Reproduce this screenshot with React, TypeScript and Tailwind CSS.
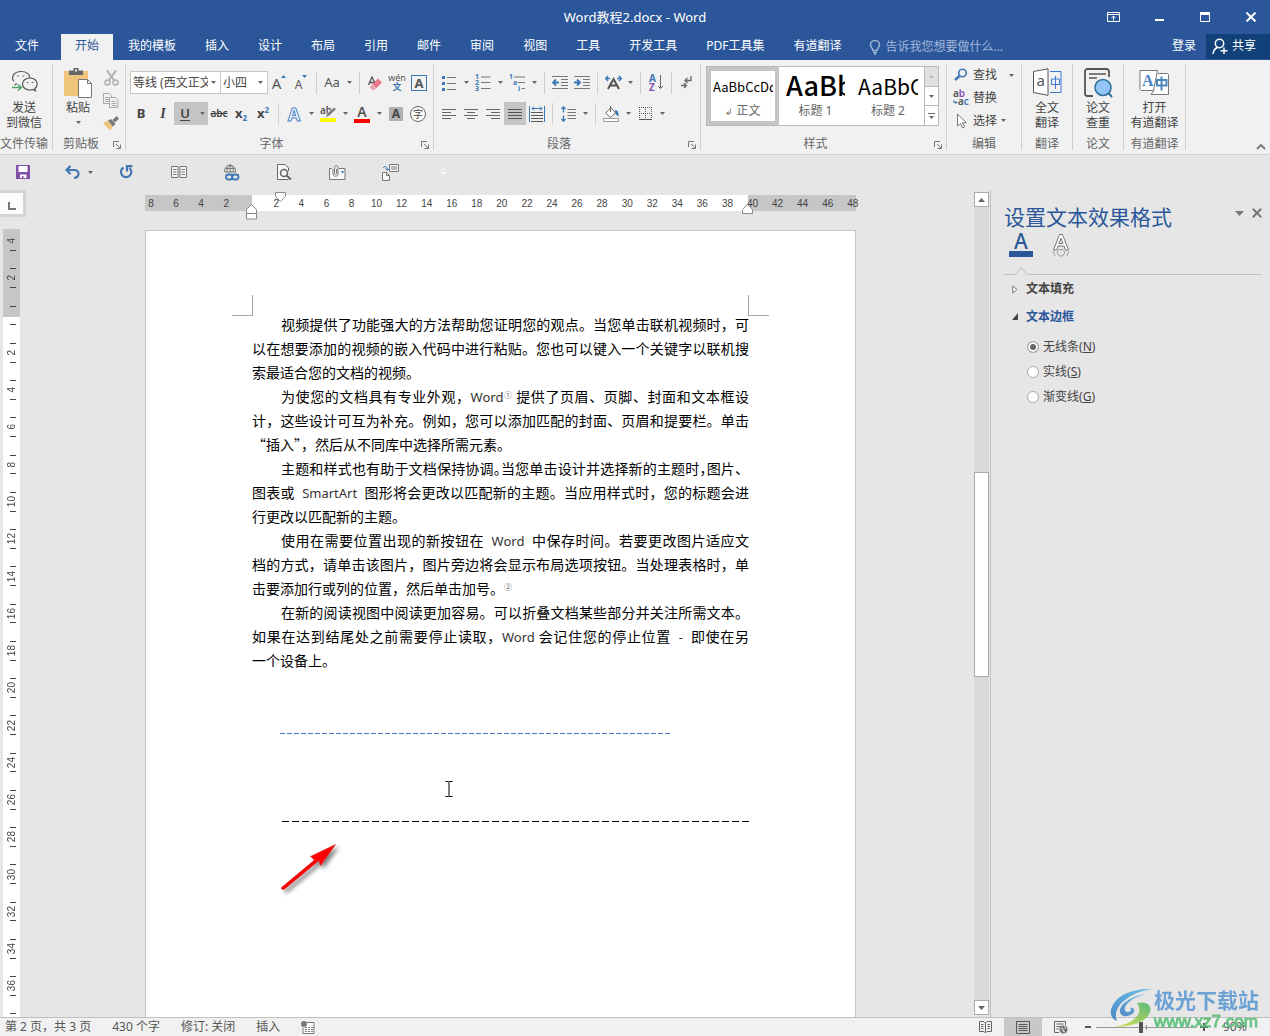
import { useState } from "react";
import type { ReactNode } from "react";

// ─── Small shared pieces ────────────────────────────────────────────────────

function Caret({ className = "" }: { className?: string }) {
  return (
    <svg width="5" height="3" viewBox="0 0 5 3" className={`shrink-0 ${className}`}>
      <path d="M0 0h5L2.5 3z" fill="#666" />
    </svg>
  );
}

function Sep() {
  return <span className="w-px h-[22px] mx-1 bg-[#d0d0d0] shrink-0" />;
}

interface ToolProps {
  label: string;
  active?: boolean;
  drop?: boolean;
  children: ReactNode;
}

function Tool({ label, active, drop, children }: ToolProps) {
  return (
    <button type="button" aria-label={label} title={label} className={`flex items-center h-[23px] shrink-0 ${active ? "bg-[#c5c5c5]" : ""}`}>
      <span className="w-[22px] flex items-center justify-center">{children}</span>
      {drop && (
        <span className="w-3 flex justify-center">
          <Caret />
        </span>
      )}
    </button>
  );
}

interface GroupProps {
  label: string;
  className: string;
  launcher?: boolean;
  children: ReactNode;
}

function Group({ label, className, launcher, children }: GroupProps) {
  return (
    <section aria-label={label} className={`flex flex-col h-[86px] shrink-0 border-r border-[#d0d0d0] ${className}`}>
      <div className="flex-1">{children}</div>
      <div className="flex h-[14px] items-start pt-px text-[#666]">
        <span className="flex-1 text-center leading-[14px] whitespace-nowrap">{label}</span>
        {launcher && (
          <button type="button" aria-label={`${label}设置`} className="w-4 flex justify-center pt-1">
            <svg width="8" height="8" viewBox="0 0 8 8" fill="none" stroke="#777">
              <path d="M.5 6V.5H6M3 3l4 4M7.5 3.5v4h-4" />
            </svg>
          </button>
        )}
      </div>
    </section>
  );
}

function BigButton({ lines, icon, drop }: { lines: string[]; icon: ReactNode; drop?: boolean }) {
  return (
    <button type="button" className="flex flex-col items-center pt-1 w-full">
      <span className="h-8 flex items-start justify-center">{icon}</span>
      {lines.map((l) => (
        <span key={l} className="leading-[15px] whitespace-nowrap">
          {l}
        </span>
      ))}
      {drop && <Caret className="mt-1.5" />}
    </button>
  );
}

// ─── Title bar and tabs ─────────────────────────────────────────────────────

const TABS = ["开始", "我的模板", "插入", "设计", "布局", "引用", "邮件", "审阅", "视图", "工具", "开发工具", "PDF工具集", "有道翻译"];

function TitleBar() {
  return (
    <div className="grid grid-cols-[1fr_auto_1fr] items-center h-[34px]">
      <span />
      <h1 className="text-[13px] pt-0.5">Word教程2.docx - Word</h1>
      <div className="flex justify-end">
        <button type="button" aria-label="功能区显示选项" className="w-[46px] flex justify-center">
          <svg width="13" height="10" viewBox="0 0 13 10" fill="none" stroke="#fff">
            <path d="M.5 .5h12v9H.5zM.5 2.5h12M6.5 8.5V4M4.5 6l2-2 2 2" />
          </svg>
        </button>
        <button type="button" aria-label="最小化" className="w-[46px] flex justify-center">
          <svg width="9" height="10" viewBox="0 0 9 10">
            <path d="M0 7h9v2H0z" fill="#fff" />
          </svg>
        </button>
        <button type="button" aria-label="最大化" className="w-[46px] flex justify-center">
          <svg width="10" height="10" viewBox="0 0 10 10">
            <path d="M.5 1h9v8.5H.5z" fill="none" stroke="#fff" />
            <path d="M0 0h10v3H0z" fill="#fff" />
          </svg>
        </button>
        <button type="button" aria-label="关闭" className="w-[46px] flex justify-center -mr-1">
          <svg width="10" height="10" viewBox="0 0 10 10" stroke="#fff" strokeWidth="2">
            <path d="M.5 .5l9 9M9.5 .5l-9 9" />
          </svg>
        </button>
      </div>
    </div>
  );
}

function TabBar() {
  const [tab, setTab] = useState("开始");
  return (
    <nav className="flex h-[26px] items-stretch">
      <button type="button" className="w-[54px] mr-[7px] pb-0.5 shrink-0">
        文件
      </button>
      <div className="flex gap-px">
        {TABS.map((t) => (
          <button
            key={t}
            type="button"
            onClick={() => setTab(t)}
            className={`px-[14px] pb-0.5 whitespace-nowrap ${t === tab ? "bg-[#f1f1f1] text-[#2b579a]" : ""}`}
          >
            {t}
          </button>
        ))}
      </div>
      <label className="flex items-center flex-1 min-w-0 pl-[14px] gap-1">
        <svg width="12" height="15" viewBox="0 0 12 15" fill="none" stroke="#9fb5d8" strokeWidth="1.5" className="shrink-0">
          <path d="M4 10.5C4 8.5 1.5 7.5 1.5 4.8a4.5 4.2 0 0 1 9 0C10.5 7.5 8 8.5 8 10.5zM4 12.5h4M5 14.2h2" />
        </svg>
        <input
          type="text"
          aria-label="告诉我您想要做什么"
          placeholder="告诉我您想要做什么..."
          className="w-full min-w-0 bg-transparent outline-none placeholder:text-[#a3b8da]"
        />
      </label>
      <button type="button" className="px-[10px] pb-0.5 whitespace-nowrap">
        登录
      </button>
      <button type="button" className="flex items-center gap-1 w-16 h-[25px] pl-1.5 bg-[#124078] whitespace-nowrap">
        <svg width="16" height="17" viewBox="0 0 16 17" fill="none" stroke="#fff" strokeWidth="1.5">
          <circle cx="7.5" cy="5.5" r="4.2" />
          <path d="M1 16c.3-3.5 2-5.500 4.500-6.500M12 9.500v6.500M8.500 12.800h7" />
        </svg>
        <span className="pb-0.5">共享</span>
      </button>
    </nav>
  );
}

// ─── Ribbon ─────────────────────────────────────────────────────────────────

function FontGroup() {
  return (
    <Group label="字体" className="w-[308px]" launcher>
      <div className="flex flex-col gap-2 pt-[7px] pl-1">
        <div className="flex items-center h-[23px]">
          <div className="relative w-[91px]">
            <select aria-label="字体名称" className="appearance-none w-full h-[23px] pl-0.5 pr-3 border border-[#c6c6c6] bg-white outline-none">
              <option>等线 (西文正文)</option>
            </select>
            <Caret className="absolute right-[5px] top-[10px] pointer-events-none" />
          </div>
          <div className="relative w-[47px]">
            <select aria-label="字号" className="appearance-none w-full h-[23px] pl-0.5 pr-3 border border-l-0 border-[#c6c6c6] bg-white outline-none">
              <option>小四</option>
            </select>
            <Caret className="absolute right-[5px] top-[10px] pointer-events-none" />
          </div>
          <Tool label="增大字号">
            <span className="text-[15px] leading-4 text-[#555]">A</span>
            <svg width="5" height="3" viewBox="0 0 5 3" className="mb-3">
              <path d="M0 3h5L2.5 0z" fill="#3c78b4" />
            </svg>
          </Tool>
          <Tool label="减小字号">
            <span className="text-[12px] leading-4 pt-1 text-[#555]">A</span>
            <svg width="5" height="3" viewBox="0 0 5 3" className="mb-3">
              <path d="M0 0h5L2.5 3z" fill="#3c78b4" />
            </svg>
          </Tool>
          <Sep />
          <Tool label="更改大小写" drop>
            <span className="text-[13px] text-[#555]">Aa</span>
          </Tool>
          <Sep />
          <Tool label="清除所有格式">
            <svg width="16" height="16" viewBox="0 0 16 16">
              <path d="M1.5 10 5 2l3 6M3 7.5h4" fill="none" stroke="#555" strokeWidth="1.3" />
              <path d="M11 3.5 15 7.5 9 13.5 5 9.5z" fill="#e8788a" />
              <path d="M5 9.5 9 13.5 7.8 15H5L2.5 12z" fill="#eb9aa6" stroke="#f1f1f1" strokeWidth=".6" />
            </svg>
          </Tool>
          <Tool label="拼音指南">
            <span className="flex flex-col items-center">
              <span className="text-[9px] leading-[9px] text-[#555]">wén</span>
              <span className="text-[9px] leading-[10px] font-bold text-[#3c78b4]">文</span>
            </span>
          </Tool>
          <Tool label="字符边框">
            <span className="w-4 h-4 border border-[#3c78b4] text-[13px] leading-[14px] font-bold text-[#555]">A</span>
          </Tool>
        </div>
        <div className="flex items-center h-[23px]">
          <Tool label="加粗">
            <span className="font-bold text-[13px]">B</span>
          </Tool>
          <Tool label="倾斜">
            <span className="italic font-bold font-['Liberation_Serif',serif] text-[14px]">I</span>
          </Tool>
          <Tool label="下划线" active drop>
            <span className="font-semibold text-[13px] leading-[14px] border-b border-[#444]">U</span>
          </Tool>
          <Tool label="删除线">
            <span className="line-through text-[10px] font-semibold">abc</span>
          </Tool>
          <Tool label="下标">
            <span className="font-bold text-[13px]">x</span>
            <span className="text-[8px] font-bold pt-2 text-[#3c78b4]">2</span>
          </Tool>
          <Tool label="上标">
            <span className="font-bold text-[13px]">x</span>
            <span className="text-[8px] font-bold pb-2 text-[#3c78b4]">2</span>
          </Tool>
          <Sep />
          <Tool label="文本效果" drop>
            <span className="text-[18px] leading-[22px] font-bold text-white [-webkit-text-stroke:1px_#4a86c5]">A</span>
          </Tool>
          <Tool label="突出显示颜色" drop>
            <span className="relative flex w-4 h-[17px] border-b-4 border-[#ff0] text-[10px] leading-[11px] font-semibold text-[#555]">
              ab
              <svg width="12" height="12" viewBox="0 0 12 12" className="absolute left-[5px] top-0.5">
                <path d="M11.5 2 4.500 8.500l-4 2.500 1.500-4.500L9 .5z" fill="#777" stroke="#f1f1f1" strokeWidth=".6" />
              </svg>
            </span>
          </Tool>
          <Tool label="字体颜色" drop>
            <span className="flex flex-col items-center w-4 border-b-4 border-[#f00] text-[14px] leading-[14px] font-semibold text-[#555]">A</span>
          </Tool>
          <Tool label="字符底纹">
            <span className="w-[14px] h-[14px] bg-[#b1b1b1] text-[12px] leading-[14px] font-bold">A</span>
          </Tool>
          <Tool label="带圈字符">
            <span className="w-4 h-4 rounded-full border border-[#666] bg-white text-[10px] leading-[14px]">字</span>
          </Tool>
        </div>
      </div>
    </Group>
  );
}

function ParagraphGroup() {
  return (
    <Group label="段落" className="w-[267px]" launcher>
      <div className="flex flex-col gap-2 pt-[7px] pl-1">
        <div className="flex items-center h-[23px]">
          <Tool label="项目符号" drop>
            <svg width="14" height="16" viewBox="0 0 14 16" stroke="#777">
              <path d="M5 2.5h9M5 8.5h9M5 14.5h9" />
              <path d="M0 2.5h3M0 8.5h3M0 14.5h3" stroke="#3c78b4" strokeWidth="3" />
            </svg>
          </Tool>
          <Tool label="编号" drop>
            <svg width="16" height="17" viewBox="0 0 16 17" className="overflow-visible">
              <path d="M6 3h9.500M6 8.500h9.500M6 14.500h9.500" stroke="#777" />
              <g fontSize="7" fontWeight="bold" fill="#3c78b4" className="font-['Noto_Sans',sans-serif]">
                <text x="0" y="5">1</text>
                <text x="0" y="11">2</text>
                <text x="0" y="17">3</text>
              </g>
            </svg>
          </Tool>
          <Tool label="多级列表" drop>
            <svg width="17" height="17" viewBox="0 0 17 17" className="overflow-visible">
              <path d="M5 3h11M9 8.500h7M12.500 14.500H16" stroke="#777" />
              <g fontSize="7" fontWeight="bold" fill="#3c78b4" className="font-['Noto_Sans',sans-serif]">
                <text x="0" y="5">1</text>
                <text x="4" y="11">a</text>
                <text x="9" y="17">i</text>
              </g>
            </svg>
          </Tool>
          <Sep />
          <Tool label="减少缩进量">
            <svg width="16" height="14" viewBox="0 0 16 14" stroke="#777">
              <path d="M0 .5h16M9 3.5h7M9 6.5h7M9 9.5h7M0 12.5h16" />
              <path d="M7 6.5H1M4 3.5l-3 3 3 3" fill="none" stroke="#3c78b4" strokeWidth="1.8" />
            </svg>
          </Tool>
          <Tool label="增加缩进量">
            <svg width="16" height="14" viewBox="0 0 16 14" stroke="#777">
              <path d="M0 .5h16M9 3.5h7M9 6.5h7M9 9.5h7M0 12.5h16" />
              <path d="M0 6.5h6M3 3.5l3 3-3 3" fill="none" stroke="#3c78b4" strokeWidth="1.8" />
            </svg>
          </Tool>
          <Sep />
          <Tool label="中文版式" drop>
            <svg width="17" height="15" viewBox="0 0 17 15" fill="none">
              <path d="M3 14 8.5 4 14 14M5 10.5h7" stroke="#555" strokeWidth="2" />
              <path d="M5 3.5H1M3 1 .8 3.5 3 6M12 3.5h4M14 1l2.2 2.5L14 6" stroke="#3c78b4" strokeWidth="1.4" />
            </svg>
          </Tool>
          <Sep />
          <Tool label="排序">
            <svg width="15" height="17" viewBox="0 0 15 17" className="overflow-visible">
              <g fontSize="10" fontWeight="bold" className="font-['Noto_Sans',sans-serif]">
                <text x="0" y="8" fill="#3c78b4">A</text>
                <text x="0" y="17" fill="#8a52b0">Z</text>
              </g>
              <path d="M11.5 1v13.5M9 12l2.5 2.5L14 12" fill="none" stroke="#666" />
            </svg>
          </Tool>
          <Sep />
          <Tool label="显示编辑标记">
            <svg width="12" height="13" viewBox="0 0 12 13" fill="none" stroke="#666" strokeWidth="1.3">
              <path d="M10 0v4.5H4M6.5 2 4 4.5 6.5 7M0 9.5h5M3 7l2.5 2.5L3 12" />
            </svg>
          </Tool>
        </div>
        <div className="flex items-center h-[23px]">
          <Tool label="左对齐">
            <svg width="14" height="10" viewBox="0 0 14 10" stroke="#666">
              <path d="M0 .5h14M0 3.5h9M0 6.5h14M0 9.5h9" />
            </svg>
          </Tool>
          <Tool label="居中">
            <svg width="14" height="10" viewBox="0 0 14 10" stroke="#666">
              <path d="M0 .5h14M3 3.5h8M0 6.5h14M3 9.5h8" />
            </svg>
          </Tool>
          <Tool label="右对齐">
            <svg width="14" height="10" viewBox="0 0 14 10" stroke="#666">
              <path d="M0 .5h14M5 3.5h9M0 6.5h14M5 9.5h9" />
            </svg>
          </Tool>
          <Tool label="两端对齐" active>
            <svg width="14" height="10" viewBox="0 0 14 10" stroke="#555">
              <path d="M0 .5h14M0 3.5h14M0 6.5h14M0 9.5h14" />
            </svg>
          </Tool>
          <Tool label="分散对齐">
            <svg width="16" height="16" viewBox="0 0 16 16" stroke="#555">
              <path d="M2 6.5h12M2 9.5h12M2 12.5h12M2 15.5h12" />
              <path d="M.5 0v16M15.5 0v16M3 2.5h10M5 .5l-2 2 2 2M11 .5l2 2-2 2" fill="none" stroke="#3c78b4" />
            </svg>
          </Tool>
          <Sep />
          <Tool label="行距" drop>
            <svg width="15" height="16" viewBox="0 0 15 16" stroke="#777">
              <path d="M6.5 3.5H15M6.5 6.5H15M6.5 9.5H15M6.5 12.5H15" />
              <path d="M2.5 1v5.5M.5 3l2-2.2 2 2.2M2.5 9.5V15M.5 13l2 2.2 2-2.2" fill="none" stroke="#3c78b4" strokeWidth="1.3" />
            </svg>
          </Tool>
          <Sep />
          <Tool label="底纹" drop>
            <svg width="17" height="16" viewBox="0 0 17 16" fill="none">
              <path d="M2.5 7 8 1.8 12.5 7l-5 4.5z" fill="#fff" stroke="#666" />
              <path d="M7.5 0v6" stroke="#666" />
              <path d="M12 4c3 0 4 3 3.5 6.5L12.5 8z" fill="#3c78b4" />
              <path d="M.5 12.5h15v3H.5z" fill="#fff" stroke="#999" />
            </svg>
          </Tool>
          <Tool label="边框" drop>
            <svg width="13" height="13" viewBox="0 0 13 13" stroke="#555">
              <path d="M0 .5h13M0 6.5h13M.5 0v13M6.5 0v13M12.5 0v13" strokeDasharray="1 1" />
              <path d="M0 12.5h13" />
            </svg>
          </Tool>
        </div>
      </div>
    </Group>
  );
}

function StylesGroup() {
  return (
    <Group label="样式" className="w-[246px]" launcher>
      <div className="flex mt-0.5 ml-[5px] w-[233px] h-[60px] border border-[#b8b8b8] bg-white">
        <button type="button" className="flex flex-col w-[72px] border-4 border-[#c5c5c5] px-0.5 overflow-hidden">
          <span className="w-full h-8 overflow-hidden whitespace-nowrap text-left text-[13px] leading-8 text-black font-['Noto_Sans_CJK_SC',sans-serif]">AaBbCcDd</span>
          <span className="w-full leading-4 text-[#666]">
            <span className="text-[9px]">↲</span> 正文
          </span>
        </button>
        <button type="button" className="flex flex-col w-[73px] px-[7px] pt-1 overflow-hidden">
          <span className="w-full h-8 overflow-hidden whitespace-nowrap text-left text-[27px] leading-[28px] font-medium text-black font-['Noto_Sans_CJK_SC',sans-serif]">AaBb</span>
          <span className="w-full leading-4 text-[#666]">标题 1</span>
        </button>
        <button type="button" className="flex flex-col w-[72px] px-[6px] pt-1 overflow-hidden">
          <span className="w-full h-8 overflow-hidden whitespace-nowrap text-left text-[21px] leading-[30px] text-black font-['Noto_Sans_CJK_SC',sans-serif]">AaBbC</span>
          <span className="w-full leading-4 text-[#666]">标题 2</span>
        </button>
        <div className="flex flex-col flex-1 border-l border-[#b8b8b8] divide-y divide-[#b8b8b8]">
          <button type="button" aria-label="上一行" className="flex-1 flex items-center justify-center bg-[#e1e1e1]">
            <Caret className="rotate-180 opacity-30" />
          </button>
          <button type="button" aria-label="下一行" className="flex-1 flex items-center justify-center">
            <Caret />
          </button>
          <button type="button" aria-label="其他" className="flex-1 flex flex-col gap-0.5 items-center justify-center">
            <span className="w-[7px] h-px bg-[#666]" />
            <Caret />
          </button>
        </div>
      </div>
    </Group>
  );
}

function EditGroup() {
  return (
    <Group label="编辑" className="w-[75px]">
      <div className="flex flex-col pl-[6px]">
        <button type="button" className="flex items-center h-[22px] gap-1">
          <svg width="16" height="14" viewBox="0 0 16 14" fill="none" stroke="#3c78b4">
            <circle cx="9.5" cy="5" r="3.8" strokeWidth="1.6" />
            <path d="M6.5 8 2 12" strokeWidth="2.5" />
          </svg>
          查找
          <Caret className="ml-2" />
        </button>
        <button type="button" className="flex items-center h-[23px] gap-1">
          <svg width="16" height="16" viewBox="0 0 16 16" fontSize="10" fontWeight="600" className="overflow-visible font-['Noto_Sans',sans-serif]">
            <text x="0" y="7">
              <tspan fill="#555">a</tspan>
              <tspan fill="#8a52b0">b</tspan>
            </text>
            <text x="5" y="15">
              <tspan fill="#555">a</tspan>
              <tspan fill="#3c78b4">c</tspan>
            </text>
            <path d="M.8 10v2.500H4M2.500 11 4 12.500 2.500 14" fill="none" stroke="#3c78b4" />
          </svg>
          替换
        </button>
        <button type="button" className="flex items-center h-[23px]">
          <svg width="16" height="16" viewBox="0 0 16 16" className="mr-1">
            <path d="M4.5 1v12l3-2.500 2 4.500 2-1-2-4.300h3.800z" fill="#fff" stroke="#777" />
          </svg>
          选择
          <Caret className="ml-1" />
        </button>
      </div>
    </Group>
  );
}

function Ribbon() {
  return (
    <div className="flex pt-1 h-[95px] bg-[#f1f1f1] border-b border-[#d2d2d2] overflow-hidden">
      <Group label="文件传输" className="w-[53px] pr-1">
        <BigButton
          lines={["发送", "到微信"]}
          icon={
            <svg width="27" height="26" viewBox="0 0 27 26" fill="none" stroke="#555" strokeWidth="1.2">
              <path d="M3 13.5C-.5 9 3 3.5 10 3.5c5 0 8.5 2.5 9 6.5M6 15.5 3.5 17" />
              <path d="M19 10c-4.500 0-7.500 2.800-7.500 6s3.200 6 7.500 6c1 0 2-.2 3-.5l2.500 1.300-.6-2.300c1.500-1.200 2.300-2.700 2.300-4.500 0-3.200-3-6-7.200-6z" />
              <path d="M7 7.500v1M12.500 7.500v1M16.500 14v1M21.500 14v1" strokeWidth="1.6" />
              <path d="M1 19.500h9M7 16.500l3.500 3-3.500 3" stroke="#4aa564" strokeWidth="1.4" />
            </svg>
          }
        />
      </Group>
      <Group label="剪贴板" className="w-[73px]" launcher>
        <div className="flex">
          <div className="w-[50px]">
            <BigButton
              lines={["粘贴"]}
              drop
              icon={
                <svg width="30" height="31" viewBox="0 0 30 31">
                  <path d="M1 3h24v25H1z" fill="#eec57b" />
                  <path d="M6 2.5h4.5V0h5v2.5H20V7H6z" fill="#666" />
                  <path d="M12 1.5h2v2h-2z" fill="#f1f1f1" />
                  <path d="M15.5 11.5h9l4 4v14h-13z" fill="#fff" stroke="#777" />
                  <path d="M24.5 11.5v4h4" fill="none" stroke="#777" />
                </svg>
              }
            />
          </div>
          <div className="flex flex-col items-center pt-0.5">
            <button type="button" aria-label="剪切" className="h-[23px]">
              <svg width="15" height="16" viewBox="0 0 15 16" fill="none" stroke="#b0b0b0" strokeWidth="1.5">
                <path d="M3 .5 10.5 11M12 .5 4.5 11" strokeWidth="2" />
                <circle cx="3.5" cy="12.5" r="2.5" />
                <circle cx="11.5" cy="12.5" r="2.5" />
              </svg>
            </button>
            <button type="button" aria-label="复制" className="h-[23px]">
              <svg width="16" height="15" viewBox="0 0 16 15" fill="#f1f1f1" stroke="#a9a9a9">
                <path d="M.5 .5h6l2 2v8h-8zM2 4.5h4M2 6.5h4M2 8.5h4" />
                <path d="M6.5 4.5h6l2.5 2.5v7.5H6.5zM8.5 8.5h4M8.5 10.5h5M8.5 12.5h5" />
              </svg>
            </button>
            <button type="button" aria-label="格式刷" className="h-[23px]">
              <svg width="16" height="15" viewBox="0 0 16 15">
                <path d="M0 7 5 4.5l5 6L7 14.5z" fill="#eec57b" />
                <path d="M5 4.5 8 3l4.5 5L10 10.500zM9.500 4 13.500 0 16 2.500l-4 4z" fill="#777" />
              </svg>
            </button>
          </div>
        </div>
      </Group>
      <FontGroup />
      <ParagraphGroup />
      <StylesGroup />
      <EditGroup />
      <Group label="翻译" className="w-[51px]">
        <BigButton
          lines={["全文", "翻译"]}
          icon={
            <svg width="29" height="28" viewBox="0 0 29 28" fill="none">
              <path d="M.5 3.5 15 .8v26.500L.5 24.500z" fill="#fff" stroke="#555" />
              <path d="M17 3.500h11v21H17M22.500 8v13M18.500 11h8v5.500h-8z" stroke="#3f7ad0" />
              <text x="3.5" y="18" fontSize="15" fill="#555" className="font-['Noto_Sans',sans-serif]">a</text>
            </svg>
          }
        />
      </Group>
      <Group label="论文" className="w-[51px]">
        <BigButton
          lines={["论文", "查重"]}
          icon={
            <svg width="29" height="30" viewBox="0 0 29 30" fill="none">
              <path d="M9 28H3.5A2.5 2.5 0 0 1 1 25.5V3.5A2.5 2.5 0 0 1 3.5 1h19A2.5 2.5 0 0 1 25 3.5V9" stroke="#555" strokeWidth="1.8" />
              <path d="M5 6h17M5 10h8" stroke="#555" strokeWidth="1.5" />
              <circle cx="19" cy="19.5" r="8" fill="#93c6f7" stroke="#31719e" strokeWidth="1.6" />
              <path d="m24.5 25 3.5 4" stroke="#31719e" strokeWidth="2" />
            </svg>
          }
        />
      </Group>
      <Group label="有道翻译" className="w-[62px]">
        <BigButton
          lines={["打开", "有道翻译"]}
          icon={
            <svg width="31" height="28" viewBox="0 0 31 28" fill="none">
              <path d="M19 5.5h9.5l1 1v20H12l3-4" fill="#fff" stroke="#777" />
              <path d="M1 2.5h17.5l-4 20H2l-1-1z" fill="#fff" stroke="#777" />
              <text x="3" y="18" fontSize="16" fontWeight="bold" fill="#4a86bf" className="font-['Liberation_Serif',serif]">A</text>
              <path d="M18 12h9.5v5.5H18zM22.5 8.5v14" stroke="#4a86bf" strokeWidth="2" />
            </svg>
          }
        />
      </Group>
      <div className="flex flex-1 items-end justify-end p-1">
        <button type="button" aria-label="折叠功能区">
          <svg width="10" height="6" viewBox="0 0 10 6" fill="none" stroke="#777" strokeWidth="1.8">
            <path d="m1 5 4-4 4 4" />
          </svg>
        </button>
      </div>
    </div>
  );
}

// ─── Quick access toolbar ───────────────────────────────────────────────────

function QuickBar() {
  const cell = "w-[53px] flex items-center justify-center shrink-0";
  return (
    <div className="flex h-[35px] items-center pb-px" role="toolbar" aria-label="快速访问工具栏">
      <button type="button" aria-label="保存" className="w-[46px] flex justify-center shrink-0">
        <svg width="14" height="14" viewBox="0 0 14 14">
          <path d="M0 0h14v14H0z" fill="#8350a8" />
          <path d="M2.5 1h9v6h-9zM4 9.5h6.5V13H7.5v-2H6v2H4z" fill="#fff" />
        </svg>
      </button>
      <button type="button" aria-label="撤消" className={cell}>
        <svg width="15" height="14" viewBox="0 0 15 14" fill="none" stroke="#4478b5" strokeWidth="2.2" className="ml-3">
          <path d="M1.5 5H9c6 0 6 7 0 8M5.5 1l-4 4 4 4" />
        </svg>
        <Caret className="ml-2" />
      </button>
      <button type="button" aria-label="重复" className={cell}>
        <svg width="14" height="14" viewBox="0 0 14 14" fill="none" stroke="#4478b5" strokeWidth="2.2">
          <path d="M4.5 2.5a5.2 5.2 0 1 0 6 .5M8 6.500V1.200h5.500" />
        </svg>
      </button>
      <button type="button" aria-label="双页" className={cell}>
        <svg width="16" height="12" viewBox="0 0 16 12" fill="#f8f8f8" stroke="#777">
          <path d="M.5 .5h6.5v11H.5zM9 .5h6.5v11H9zM2 3.5h3.500M2 6h3.500M2 8.500h3.500M10.500 3.500H14M10.500 6H14M10.500 8.500H14" />
        </svg>
      </button>
      <button type="button" aria-label="超链接" className={cell}>
        <svg width="16" height="17" viewBox="0 0 16 17" fill="none" stroke="#777">
          <path d="M.8 8A5.500 5.500 0 1 1 11.500 8M.8 8h10.700M1.500 4.500h9.500M6.200 .5v8M6.200 .5C3 3 3 6 3.500 8M6.200 .5C9.500 3 9.500 6 9 8" />
          <rect x="2" y="10.5" width="6.5" height="5" rx="2.5" stroke="#3c78b4" strokeWidth="1.8" />
          <rect x="8" y="10.5" width="6.5" height="5" rx="2.5" stroke="#3c78b4" strokeWidth="1.8" />
        </svg>
      </button>
      <button type="button" aria-label="打印预览" className={cell}>
        <svg width="15" height="16" viewBox="0 0 15 16" fill="none" stroke="#666">
          <path d="M11.5 15.5H.5V.5H8l3.5 3.5v3" fill="#f8f8f8" />
          <circle cx="7" cy="9" r="3.5" strokeWidth="1.6" />
          <path d="m9.5 11.5 4.5 4" strokeWidth="2" />
        </svg>
      </button>
      <button type="button" aria-label="附件" className={cell}>
        <svg width="17" height="15" viewBox="0 0 17 15" fill="none" stroke="#777">
          <path d="M3 3.5H.5v11h15.5v-11H10" fill="#f8f8f8" />
          <path d="M4 4v5c0 3 5 3 5 0V2.5C9 0 5.5 0 5.5 2.5v6c0 1 2 1 2 0V4" />
          <path d="M12.5 6h2v2h-2z" fill="#3c78b4" stroke="none" />
        </svg>
      </button>
      <button type="button" aria-label="更新域" className={cell}>
        <svg width="17" height="17" viewBox="0 0 17 17" fill="none" stroke="#777">
          <path d="M7.5 .5h9v7h-9zM9 3h6M9 5h6M.5 8.5h4l3 3v5h-7zM4.5 8.5v3h3" fill="#f8f8f8" />
          <path d="M1 4c2-2.500 4-1.500 4.500 2M3.500 4.500l2 2 2-2" stroke="#3c78b4" />
        </svg>
      </button>
      <button type="button" aria-label="自定义" className={cell}>
        <svg width="5" height="6" viewBox="0 0 5 6" fill="#fafafa">
          <path d="M0 0h5v1H0zM0 3h5L2.5 6z" />
        </svg>
      </button>
    </div>
  );
}

// ─── Rulers ─────────────────────────────────────────────────────────────────

const H_MARKS = [8, 6, 4, 2, 0, ...Array.from({ length: 24 }, (_, i) => (i + 1) * 2)];

function HorizontalRuler() {
  return (
    <div className="relative mt-[5px] w-[711px] h-4 shrink-0">
      <div className="flex h-full">
        <span className="w-[107px] bg-[#c6c6c6]" />
        <span className="flex-1 bg-white" />
        <span className="w-[108px] bg-[#c6c6c6]" />
      </div>
      <div className="absolute inset-0 flex justify-between items-center pl-1.5 pr-[3px] text-[10px] font-['Liberation_Sans',Arial,sans-serif]">
        {H_MARKS.map((n, i) => (
          <span key={i} className="w-0 flex justify-center">
            {n > 0 ? n : ""}
          </span>
        ))}
      </div>
      <svg width="11" height="16" viewBox="0 0 11 16" fill="#fff" stroke="#8a8a8a" className="absolute left-[101px] top-[9px]">
        <path d="M.5 5.5 5.5 .5l5 5v9.500H.5zM.5 9.500h10" />
      </svg>
      <svg width="11" height="10" viewBox="0 0 11 10" fill="#fff" stroke="#8a8a8a" className="absolute left-[130px] -top-[3px]">
        <path d="M.5 .5h10v4l-5 5-5-5z" />
      </svg>
      <svg width="11" height="10" viewBox="0 0 11 10" fill="#fff" stroke="#8a8a8a" className="absolute left-[597px] top-[9px]">
        <path d="M.5 5.5 5.500 .5l5 5v4H.5z" />
      </svg>
    </div>
  );
}

// four slots for each labelled step: the number, a tick, an empty slot, a tick
const V_SLOTS = [4, 2, 0, ...Array.from({ length: 18 }, (_, i) => (i + 1) * 2)].flatMap((n) => [n > 0 ? String(n) : "", "tick", "", "tick"]);

function VerticalRuler() {
  return (
    <div className="flex flex-col w-[27px] shrink-0">
      <button type="button" aria-label="制表符" className="w-[26px] h-[27px] border-[3px] border-l-0 border-[#d4d4d4] bg-[#fcfcfc] flex items-center justify-center">
        <span className="w-2 h-2 border-l-2 border-b-2 border-[#777] mt-1" />
      </button>
      <div className="flex-1 relative w-[17px] mt-3 ml-[3px] flex flex-col">
        <div className="h-[88px] bg-[#c6c6c6]" />
        <div className="flex-1 bg-white" />
        <div className="absolute inset-0 flex flex-col justify-between pt-3 pb-[3px] text-[10px] font-['Liberation_Sans',Arial,sans-serif]">
          {V_SLOTS.map((s, i) => (
            <span key={i} className="h-0 flex items-center justify-center">
              {s === "tick" ? <span className="w-1.5 h-px bg-[#444] shrink-0 ml-0.5" /> : <span className="[writing-mode:vertical-rl] rotate-180 leading-3">{s}</span>}
            </span>
          ))}
        </div>
      </div>
    </div>
  );
}

// ─── Document ───────────────────────────────────────────────────────────────

interface LineProps {
  first?: boolean;
  last?: boolean;
  children: ReactNode;
}

function Line({ first, last, children }: LineProps) {
  return <span className={`block h-6 whitespace-nowrap ${first ? "pl-[29px]" : ""} ${last ? "" : "[text-align-last:justify]"}`}>{children}</span>;
}

// half-width punctuation, used where a full line would run past the margin
function Half({ children }: { children: ReactNode }) {
  return <span className="[font-feature-settings:'halt']">{children}</span>;
}

function Note({ children }: { children: ReactNode }) {
  return <sup className="text-[8px] leading-none text-[#666]">{children}</sup>;
}

function Latin({ wide, children }: { wide?: boolean; children: ReactNode }) {
  return <span className={`text-[#333] font-['Noto_Sans',sans-serif] text-[13px] ${wide ? "mx-1" : ""}`}>{children}</span>;
}

function Page() {
  return (
    <article className="w-[711px] flex-1 min-h-0 mt-[19px] border border-b-0 border-[#c6c6c6] bg-white px-[86px] pt-16 overflow-hidden">
      <div className="flex justify-between">
        <span className="w-[21px] h-[21px] border-r border-b border-[#a6a6a6]" />
        <span className="w-[21px] h-[21px] border-l border-b border-[#a6a6a6]" />
      </div>
      <div className="-mt-1 px-5 text-[14px] leading-6 text-black font-['Noto_Sans_CJK_SC',sans-serif]">
        <p>
          <Line first>视频提供了功能强大的方法帮助您证明您的观点。当您单击联机视频时，可</Line>
          <Line>以在想要添加的视频的嵌入代码中进行粘贴。您也可以键入一个关键字以联机搜</Line>
          <Line last>索最适合您的文档的视频。</Line>
        </p>
        <p>
          <Line first>
            为使您的文档具有专业外观，<Latin>Word</Latin>
            <Note>①</Note> 提供了页眉、页脚、封面和文本框设
          </Line>
          <Line>计，这些设计可互为补充。例如，您可以添加匹配的封面、页眉和提要栏。单击</Line>
          <Line last>“插入”，然后从不同库中选择所需元素。</Line>
        </p>
        <p>
          <Line first>
            主题和样式也有助于文档保持协调<Half>。</Half>当您单击设计并选择新的主题时<Half>，</Half>图片、
          </Line>
          <Line>
            图表或 <Latin wide>SmartArt</Latin> 图形将会更改以匹配新的主题。当应用样式时，您的标题会进
          </Line>
          <Line last>行更改以匹配新的主题。</Line>
        </p>
        <p>
          <Line first>
            使用在需要位置出现的新按钮在 <Latin wide>Word</Latin> 中保存时间。若要更改图片适应文
          </Line>
          <Line>档的方式，请单击该图片，图片旁边将会显示布局选项按钮。当处理表格时，单</Line>
          <Line last>
            击要添加行或列的位置，然后单击加号。<Note>②</Note>
          </Line>
        </p>
        <p>
          <Line first>在新的阅读视图中阅读更加容易。可以折叠文档某些部分并关注所需文本。</Line>
          <Line>
            如果在达到结尾处之前需要停止读取，<Latin>Word</Latin> 会记住您的停止位置 <Latin wide>-</Latin> 即使在另
          </Line>
          <Line last>一个设备上。</Line>
        </p>
        <svg width="500" height="180" viewBox="0 0 500 180" className="mt-12" fill="none">
          <defs>
            <filter id="shade" x="-20%" y="-20%" width="150%" height="150%">
              <feDropShadow dx="3" dy="3" stdDeviation="2" floodColor="#000" floodOpacity=".5" />
            </filter>
          </defs>
          <path d="M28 13.5h391" stroke="#4472c4" strokeDasharray="5 2" />
          <path d="M30 101.5h468" stroke="#000" strokeDasharray="7 3" />
          <path d="M193.5 61.5h3l.5 .5 .5-.5h3M197 62v14M193.5 76.5h3l.5-.5 .5 .5h3" stroke="#000" />
          <path d="m29.5 167.5 33-27.5-4-3.500 25-12-15 21-1.500-5-35 29-2.500-.5z" fill="#f00" stroke="#c22" strokeWidth=".6" filter="url(#shade)" />
        </svg>
      </div>
    </article>
  );
}

function ScrollBar() {
  const end = "h-[15px] shrink-0 flex items-center justify-center border border-[#ababab] bg-white";
  return (
    <div className="flex flex-col w-[15px] shrink-0 mt-0.5 mb-0.5 bg-[#dadada]">
      <button type="button" aria-label="向上滚动" className={end}>
        <svg width="7" height="4" viewBox="0 0 7 4">
          <path d="M0 4h7L3.5 0z" fill="#666" />
        </svg>
      </button>
      <span className="flex-[265]" />
      <span className="h-[205px] border border-[#ababab] bg-white" />
      <span className="flex-[323]" />
      <button type="button" aria-label="向下滚动" className={end}>
        <svg width="7" height="4" viewBox="0 0 7 4">
          <path d="M0 0h7L3.5 4z" fill="#666" />
        </svg>
      </button>
    </div>
  );
}

// ─── Format pane ────────────────────────────────────────────────────────────

const OUTLINES = [
  { name: "无线条", hotkey: "N" },
  { name: "实线", hotkey: "S" },
  { name: "渐变线", hotkey: "G" },
];

function FormatPane() {
  const [outline, setOutline] = useState("N");
  return (
    <aside className="w-[280px] shrink-0 border-l border-[#c0c0c0] ml-px pl-[13px] pr-2 pt-3">
      <div className="flex justify-between">
        <h2 className="text-[21px] leading-[30px] text-[#2b579a]">设置文本效果格式</h2>
        <div className="flex gap-2 h-[22px] items-center">
          <button type="button" aria-label="任务窗格选项">
            <svg width="9" height="5" viewBox="0 0 9 5">
              <path d="M0 0h9L4.5 5z" fill="#777" />
            </svg>
          </button>
          <button type="button" aria-label="关闭窗格">
            <svg width="10" height="10" viewBox="0 0 10 10" stroke="#777" strokeWidth="2">
              <path d="m.8 .8 8.400 8.400M9.200 .8 .8 9.200" />
            </svg>
          </button>
        </div>
      </div>
      <div className="flex gap-4 pl-[5px]">
        <button type="button" aria-label="文本填充与轮廓">
          <svg width="24" height="25" viewBox="0 0 24 25" className="overflow-visible">
            <text x="12" y="17" textAnchor="middle" fontSize="21" fontWeight="500" fill="#2b579a" className="font-['Noto_Sans',sans-serif]">A</text>
            <path d="M0 19h24v6H0z" fill="#2b579a" />
          </svg>
        </button>
        <button type="button" aria-label="文字效果">
          <svg width="24" height="25" viewBox="0 0 24 25" fill="none" stroke="#777">
            <path d="M4.5 18 10.5 2.5h3L19.5 18h-3.200l-1.300-4H9l-1.300 4zM10 11.500h4L12 6z" fill="#fff" />
            <path d="M4.5 19c0 2 1 3 1.500 5M19.500 19c0 2-1 3-1.500 5M8.500 19.500 10 17.500h4l1.500 2v2l-2 2.500h-3l-2-2.500z" stroke="#999" />
          </svg>
        </button>
      </div>
      <div className="flex items-end h-[18px]">
        <span className="w-[11px] h-px bg-[#c0c0c0]" />
        <svg width="12" height="9" viewBox="0 0 12 9" fill="none" stroke="#c0c0c0">
          <path d="M0 8.5 .5 8 6 1l5.500 7 .5 .5" />
        </svg>
        <span className="flex-1 h-px bg-[#c0c0c0]" />
      </div>
      <button type="button" className="flex items-center gap-2 h-[28px] pl-2 font-bold">
        <svg width="6" height="9" viewBox="0 0 6 9" fill="#fff" stroke="#777">
          <path d="M.8 1v7L5 4.500z" />
        </svg>
        文本填充
      </button>
      <button type="button" className="flex items-center gap-2 h-[27px] pl-2 font-bold text-[#2b579a]">
        <svg width="6" height="7" viewBox="0 0 6 7">
          <path d="M6 0v7H0z" fill="#444" />
        </svg>
        文本边框
      </button>
      <fieldset className="flex flex-col pt-1 pl-[23px]">
        {OUTLINES.map((o) => (
          <label key={o.hotkey} className="flex items-center gap-1 h-[25px]">
            <input
              type="radio"
              name="outline"
              checked={outline === o.hotkey}
              onChange={() => setOutline(o.hotkey)}
              className="appearance-none w-3 h-3 rounded-full border border-[#ababab] bg-white checked:bg-[#666] checked:shadow-[inset_0_0_0_2px_white]"
            />
            <span>
              {o.name}(<u>{o.hotkey}</u>)
            </span>
          </label>
        ))}
      </fieldset>
    </aside>
  );
}

// ─── Status bar ─────────────────────────────────────────────────────────────

function StatusBar() {
  const [zoom, setZoom] = useState(90);
  return (
    <footer className="flex items-center h-[19px] shrink-0 border-t border-[#c0c0c0] bg-[#f1f1f1] leading-[18px] whitespace-nowrap text-[#555]">
      <div className="flex items-center gap-[21px] pl-[5px]">
        <span>第 2 页，共 3 页</span>
        <span>430 个字</span>
        <span>修订: 关闭</span>
        <span>插入</span>
        <svg width="14" height="13" viewBox="0 0 14 13" fill="none" stroke="#777">
          <path d="M6 1.5h7v11H2V6.5" fill="#fff" />
          <path d="M4 6.5h8M4 8.5h8M4 10.5h8" strokeDasharray="2 1" />
          <circle cx="3" cy="3" r="3" fill="#777" stroke="none" />
        </svg>
      </div>
      <div className="flex items-center ml-auto h-full">
        <button type="button" aria-label="阅读视图" className="w-[38px] flex justify-center">
          <svg width="13" height="12" viewBox="0 0 13 12" fill="none" stroke="#666">
            <path d="M6.5 2 5 .5H.5v10H5l1.500 1.500L8 10.500h4.500V.5H8zM6.500 2v9M2 3.500h2.500M2 5.500h2.500M2 7.500h2.500M8.500 3.500H11M8.500 5.500H11M8.500 7.500H11" />
          </svg>
        </button>
        <button type="button" aria-label="页面视图" className="w-[38px] h-full flex items-center justify-center bg-[#c8c8c8]">
          <svg width="14" height="13" viewBox="0 0 14 13" fill="none" stroke="#555">
            <path d="M.5 .5h13v12H.5zM2.5 3.5h9M2.5 5.5h9M2.5 7.5h9M2.5 9.5h9" />
          </svg>
        </button>
        <button type="button" aria-label="Web 版式视图" className="w-[38px] flex justify-center">
          <svg width="14" height="13" viewBox="0 0 14 13" fill="none" stroke="#666">
            <path d="M5 11.5H.5V.5h11V4M2.5 3h7M2.5 5.5h5M2.5 8H5" />
            <circle cx="9.5" cy="8.5" r="4" fill="#777" stroke="none" />
            <path d="m7 7 2 1v2l2 1M10.5 5.5l1 2" stroke="#eee" />
          </svg>
        </button>
        <button type="button" aria-label="缩小" className="w-4 flex justify-center">
          <span className="w-1.5 h-0.5 bg-[#555]" />
        </button>
        <div className="relative flex items-center">
          <span className="absolute left-1/2 w-px h-[5px] bg-[#888]" />
          <input
            type="range"
            aria-label="缩放级别"
            min={10}
            max={190}
            value={zoom}
            onChange={(e) => setZoom(Number(e.target.value))}
            className="appearance-none w-[100px] h-px bg-[#999] [&::-webkit-slider-thumb]:appearance-none [&::-webkit-slider-thumb]:w-1 [&::-webkit-slider-thumb]:h-[11px] [&::-webkit-slider-thumb]:bg-[#555]"
          />
        </div>
        <button type="button" aria-label="放大" className="w-4 flex justify-center">
          <svg width="8" height="8" viewBox="0 0 8 8" stroke="#555" strokeWidth="2">
            <path d="M0 4h8M4 0v8" />
          </svg>
        </button>
        <span className="w-[58px] pl-[11px]">{zoom}%</span>
      </div>
    </footer>
  );
}

function SiteBadge() {
  return (
    <div className="absolute right-[11px] bottom-1 flex items-start gap-px pointer-events-none opacity-90">
      <svg width="43" height="42" viewBox="0 0 43 42">
        <defs>
          <linearGradient id="sky" x1="0" y1="1" x2="1" y2="0">
            <stop offset="0" stopColor="#3d7fc4" />
            <stop offset="1" stopColor="#62c0e8" />
          </linearGradient>
          <linearGradient id="leaf" x1="0" y1="1" x2="1" y2="0">
            <stop offset="0" stopColor="#d9e04a" />
            <stop offset="1" stopColor="#4fb56d" />
          </linearGradient>
        </defs>
        <path d="M42 1C22 0 4 8 1 22c-1 6 2 10 6 11-3-7 0-15 8-21C22 6 31 3 42 1z" fill="url(#sky)" />
        <path d="M36 6C20 8 9 17 10 24c1 6 11 5 14 0 1-3-1-5-4-4 2 1 1 4-2 4-5 0-4-6 1-10 4-4 10-6 17-8z" fill="url(#sky)" />
        <path d="M27 15c9-2 15 2 13 9-3 9-16 15-36 15 12-2 22-7 25-14 1-4 0-7-2-10z" fill="url(#leaf)" />
      </svg>
      <div className="flex flex-col">
        <span className="text-[21px] leading-6 font-bold text-[#5f9bd3]">极光下载站</span>
        <span className="text-[17px] leading-5 text-[#4fb870] [-webkit-text-stroke:1px_#5fbf7c] font-['Liberation_Sans',Arial,sans-serif]">www.xz7.com</span>
      </div>
    </div>
  );
}

export default function App() {
  return (
    <div className="relative h-screen flex flex-col overflow-hidden bg-[#e6e6e6] text-[12px] text-[#444] font-['Noto_Sans','Noto_Sans_CJK_SC',sans-serif]">
      <header className="shrink-0">
        <div className="bg-[#2b579a] text-white">
          <TitleBar />
          <TabBar />
        </div>
        <Ribbon />
        <QuickBar />
      </header>
      <main className="flex flex-1 min-h-0">
        <VerticalRuler />
        <div className="flex-1 min-w-0 flex flex-col items-center overflow-hidden">
          <HorizontalRuler />
          <Page />
        </div>
        <ScrollBar />
        <FormatPane />
      </main>
      <StatusBar />
      <SiteBadge />
    </div>
  );
}
